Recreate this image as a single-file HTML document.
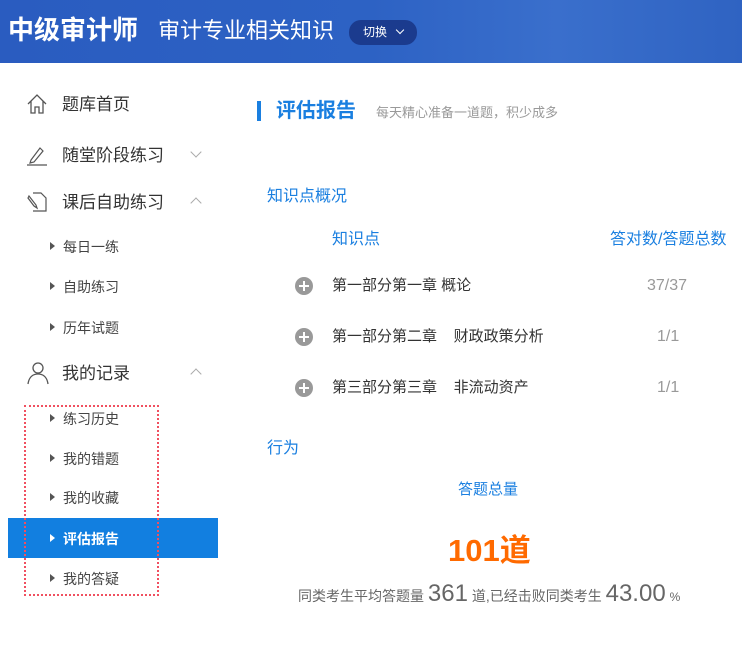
<!DOCTYPE html><html><head><meta charset="utf-8"><style>
*{margin:0;padding:0;box-sizing:border-box}
body{width:742px;height:652px;background:#fff;font-family:"Liberation Sans","Noto Sans CJK SC",sans-serif;position:relative;overflow:hidden;color:#333}
.a{position:absolute;white-space:nowrap;line-height:1}
.hd{position:absolute;left:0;top:0;width:742px;height:63px;background:linear-gradient(90deg,#2a5cc0 0%,#2d62c4 50%,#3a6fcc 75%,#2f63c2 100%)}
.nav{font-size:17px;color:#333}
.sub{font-size:14px;color:#444}
.tri{position:absolute;width:0;height:0;border-left:5px solid #555;border-top:4px solid transparent;border-bottom:4px solid transparent}
.blue{color:#1a7fe0}
.plus{position:absolute;width:18px;height:18px;border-radius:50%;background:#999}
.plus:before{content:"";position:absolute;left:4px;top:8px;width:10px;height:2px;background:#fff}
.plus:after{content:"";position:absolute;left:8px;top:4px;width:2px;height:10px;background:#fff}
.chev{position:absolute;width:8px;height:8px;border-right:1px solid #aaa;border-bottom:1px solid #aaa}
</style></head><body>
<div class="hd"></div>
<div class="a" style="left:8px;top:17px;font-size:26px;font-weight:bold;color:#fff">中级审计师</div>
<div class="a" style="left:158px;top:20px;font-size:22px;color:#fff">审计专业相关知识</div>
<div class="a" style="left:349px;top:20px;width:68px;height:25px;border-radius:12px;background:#1b3b8e"></div>
<div class="a" style="left:363px;top:26px;font-size:12px;color:#fff">切换</div>
<div class="chev" style="left:397px;top:27px;border-color:#fff;transform:rotate(45deg);width:6px;height:6px"></div>

<svg class="a" style="left:26px;top:93px" width="22" height="22" viewBox="0 0 22 22" fill="none" stroke="#555" stroke-width="1.3"><path d="M2 11L11 2L20 11M5 8V20H9V14H13V20H17V8"/></svg>
<div class="a nav" style="left:62px;top:96px">题库首页</div>
<svg class="a" style="left:26px;top:144px" width="22" height="22" viewBox="0 0 22 22" fill="none" stroke="#555" stroke-width="1.2"><path d="M5 16L14 4L17 7L8 18L4 19Z M1 21H21"/></svg>
<div class="a nav" style="left:62px;top:147px">随堂阶段练习</div>
<div class="chev" style="left:192px;top:148px;transform:rotate(45deg)"></div>
<svg class="a" style="left:26px;top:191px" width="22" height="22" viewBox="0 0 22 22" fill="none" stroke="#555" stroke-width="1.2"><path d="M7 2H15L20 7V20H7 M3 5L10 14L11 17L8 15L2 7Z"/></svg>
<div class="a nav" style="left:62px;top:194px">课后自助练习</div>
<div class="chev" style="left:192px;top:199px;transform:rotate(-135deg)"></div>
<div class="tri" style="left:50px;top:242px"></div><div class="a sub" style="left:63px;top:240px">每日一练</div>
<div class="tri" style="left:50px;top:282px"></div><div class="a sub" style="left:63px;top:280px">自助练习</div>
<div class="tri" style="left:50px;top:323px"></div><div class="a sub" style="left:63px;top:321px">历年试题</div>
<svg class="a" style="left:26px;top:361px" width="24" height="24" viewBox="0 0 24 24" fill="none" stroke="#555" stroke-width="1.3"><circle cx="12" cy="7" r="5"/><path d="M2 23C3 16 7 13 12 13C17 13 21 16 22 23"/></svg>
<div class="a nav" style="left:62px;top:365px">我的记录</div>
<div class="chev" style="left:192px;top:370px;transform:rotate(-135deg)"></div>
<div class="a" style="left:8px;top:518px;width:210px;height:40px;background:#127fe0"></div>
<div class="a" style="left:24px;top:405px;width:135px;height:191px;border:2px dotted #f05060"></div>
<div class="tri" style="left:50px;top:414px"></div><div class="a sub" style="left:63px;top:412px">练习历史</div>
<div class="tri" style="left:50px;top:454px"></div><div class="a sub" style="left:63px;top:452px">我的错题</div>
<div class="tri" style="left:50px;top:493px"></div><div class="a sub" style="left:63px;top:491px">我的收藏</div>
<div class="tri" style="left:50px;top:534px;border-left-color:#fff"></div><div class="a sub" style="left:63px;top:532px;color:#fff;font-weight:bold">评估报告</div>
<div class="tri" style="left:50px;top:574px"></div><div class="a sub" style="left:63px;top:572px">我的答疑</div>

<div class="a" style="left:257px;top:101px;width:4px;height:20px;background:#1a7fe0"></div>
<div class="a blue" style="left:276px;top:101px;font-size:20px;font-weight:bold">评估报告</div>
<div class="a" style="left:376px;top:106px;font-size:13px;color:#999">每天精心准备一道题，积少成多</div>
<div class="a blue" style="left:267px;top:189px;font-size:16px">知识点概况</div>
<div class="a blue" style="left:332px;top:232px;font-size:16px">知识点</div>
<div class="a blue" style="left:610px;top:232px;font-size:16px">答对数/答题总数</div>
<div class="plus" style="left:295px;top:277px"></div><div class="a" style="left:332px;top:278px;font-size:15px">第一部分第一章 概论</div><div class="a" style="left:647px;top:278px;font-size:16px;color:#999">37/37</div>
<div class="plus" style="left:295px;top:328px"></div><div class="a" style="left:332px;top:329px;font-size:15px">第一部分第二章&nbsp;&nbsp;&nbsp;&nbsp;财政政策分析</div><div class="a" style="left:657px;top:329px;font-size:16px;color:#999">1/1</div>
<div class="plus" style="left:295px;top:379px"></div><div class="a" style="left:332px;top:380px;font-size:15px">第三部分第三章&nbsp;&nbsp;&nbsp;&nbsp;非流动资产</div><div class="a" style="left:657px;top:380px;font-size:16px;color:#999">1/1</div>
<div class="a blue" style="left:267px;top:441px;font-size:16px">行为</div>
<div class="a blue" style="left:458px;top:482px;font-size:15px">答题总量</div>
<div class="a" style="left:448px;top:535px;font-size:31px;font-weight:bold;color:#ff6a00">101道</div>
<div class="a" style="left:298px;top:582px;font-size:14px;color:#666">同类考生平均答题量 <span style="font-size:24px">361</span> 道,已经击败同类考生 <span style="font-size:24px">43.00</span> <span style="font-size:12px">%</span></div>
</body></html>
